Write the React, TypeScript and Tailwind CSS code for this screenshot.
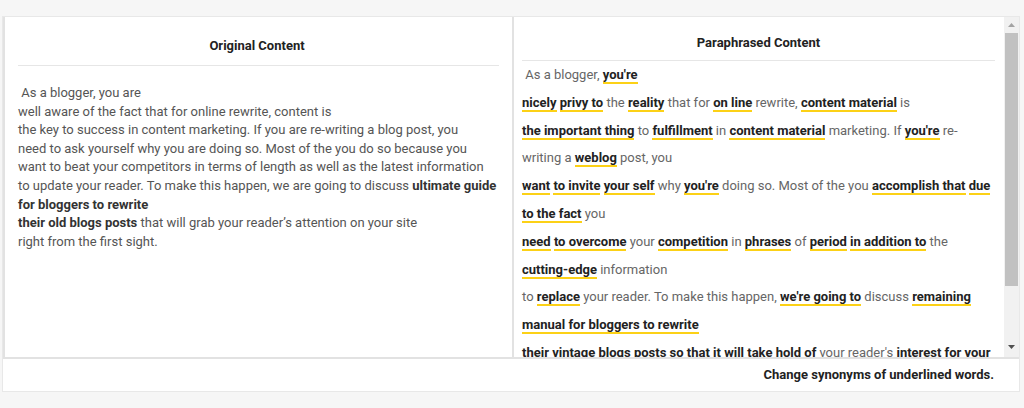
import React from "react";

type Seg = string | { b: string; u?: boolean };

// lines of the paraphrased text, one entry per visual line
const paraphrased: Seg[][] = [
  ["\u00a0As a blogger, ", { b: "you're", u: true }],
  [{ b: "nicely", u: true }, " ", { b: "privy to", u: true }, " the ", { b: "reality", u: true }, " that for ", { b: "on line", u: true }, " rewrite, ", { b: "content material", u: true }, " is"],
  [{ b: "the important thing", u: true }, " to ", { b: "fulfillment", u: true }, " in ", { b: "content material", u: true }, " marketing. If ", { b: "you're", u: true }, " re-"],
  ["writing a ", { b: "weblog", u: true }, " post, you"],
  [{ b: "want", u: true }, " ", { b: "to invite", u: true }, " ", { b: "your self", u: true }, " why ", { b: "you're", u: true }, " doing so. Most of the you ", { b: "accomplish that", u: true }, " ", { b: "due", u: true }],
  [{ b: "to the fact", u: true }, " you"],
  [{ b: "need", u: true }, " ", { b: "to overcome", u: true }, " your ", { b: "competition", u: true }, " in ", { b: "phrases", u: true }, " of ", { b: "period", u: true }, " ", { b: "in addition to", u: true }, " the"],
  [{ b: "cutting-edge", u: true }, " information"],
  ["to ", { b: "replace", u: true }, " your reader. To make this happen, ", { b: "we're going to", u: true }, " discuss ", { b: "remaining", u: true }],
  [{ b: "manual for bloggers to rewrite", u: true }],
  [{ b: "their", u: true }, " ", { b: "vintage", u: true }, " ", { b: "blogs posts", u: true }, " ", { b: "so that it will take hold of", u: true }, " your reader's ", { b: "interest for your", u: true }],
  [{ b: "site", u: true }, " right from the first sight."],
];

function Line({ segs }: { segs: Seg[] }) {
  return (
    <div className="whitespace-nowrap">
      {segs.map((s, i) =>
        typeof s === "string" ? (
          <span key={i}>{s}</span>
        ) : (
          <span key={i} className={`font-bold text-[#222] ${s.u ? "border-b-2 border-[#fcd116]" : ""}`}>
            {s.b}
          </span>
        )
      )}
    </div>
  );
}

export default function App() {
  return (
    <div className="h-[408px] bg-[#f6f6f6] pt-4 pl-[2px] pr-[4px] font-['Roboto',sans-serif]">
      <div className="bg-white border border-[#e8e8e8] flex flex-col">
        <div className="flex h-[342px]">
          <div className="w-[511px] border-l-2 border-r-2 border-b-2 border-[#e2e2e2] px-[13px]">
            <div className="pt-[19px] pb-[9px] pr-[3px] text-center text-[13px] leading-5 font-bold text-[#222]">Original Content</div>
            <div className="h-px bg-[#e6e6e6]" />
            <div className="pt-[18px] text-[13px] leading-[18.6px] text-[#555]">
              <div>&nbsp;As a blogger, you are</div>
              <div>well aware of the fact that for online rewrite, content is</div>
              <div>the key to success in content marketing. If you are re-writing a blog post, you</div>
              <div>need to ask yourself why you are doing so. Most of the you do so because you</div>
              <div>want to beat your competitors in terms of length as well as the latest information</div>
              <div>
                to update your reader. To make this happen, we are going to discuss <b className="text-[#333]">ultimate guide</b>
              </div>
              <div>
                <b className="text-[#333]">for bloggers to rewrite</b>
              </div>
              <div>
                <b className="text-[#333]">their old blogs posts</b> that will grab your reader’s attention on your site
              </div>
              <div>right from the first sight.</div>
            </div>
          </div>
          <div className="flex-1 flex border-b-2 border-[#e2e2e2] min-w-0">
            <div className="flex-1 overflow-hidden pl-2 pr-[9px]">
              <div className="pt-4 pb-[7px] text-center text-[13px] leading-5 font-bold text-[#222]">Paraphrased Content</div>
              <div className="h-px bg-[#e6e6e6]" />
              <div className="text-[13px] leading-[27.8px] text-[#666]">
                {paraphrased.map((l, i) => (
                  <Line key={i} segs={l} />
                ))}
              </div>
            </div>
            <div className="w-[15px] bg-[#f1f1f1] flex flex-col">
              <div className="h-4 flex items-center justify-center">
                <svg width="7" height="4" viewBox="0 0 7 4">
                  <path d="M3.5 0L7 4H0z" fill="#a3a3a3" />
                </svg>
              </div>
              <div className="h-[253px] mx-px bg-[#c1c1c1]" />
              <div className="flex-1" />
              <div className="h-4 flex items-center justify-center mb-[2px]">
                <svg width="7" height="4" viewBox="0 0 7 4">
                  <path d="M0 0H7L3.5 4z" fill="#505050" />
                </svg>
              </div>
            </div>
          </div>
        </div>
        <div className="h-[32px] flex items-center justify-end pr-[25px] text-[13px] font-bold text-[#222]">
          Change synonyms of underlined words.
        </div>
      </div>
    </div>
  );
}
